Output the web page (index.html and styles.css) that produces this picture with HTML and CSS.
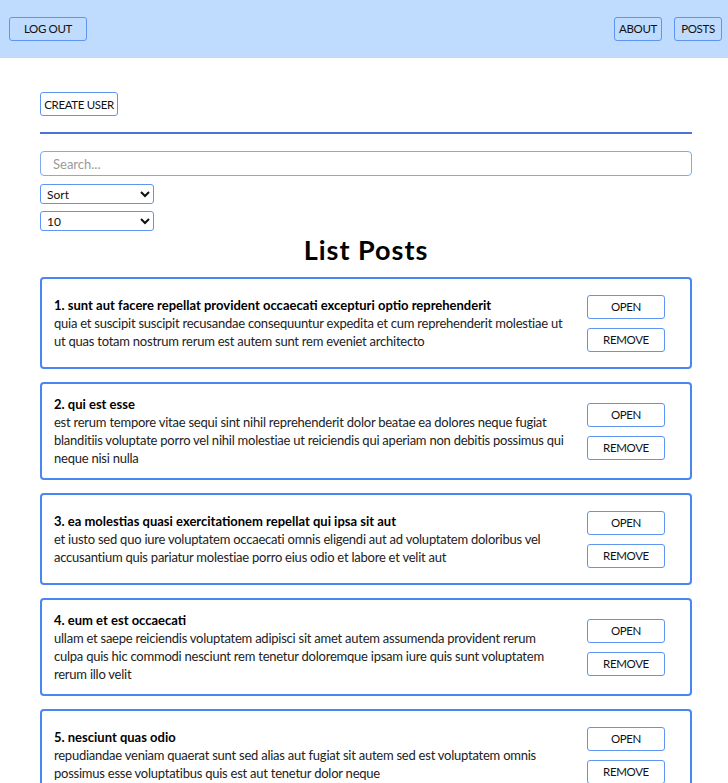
FILE: index.html
```html
<!DOCTYPE html>
<html lang="en">
<head>
<meta charset="utf-8">
<title>Posts</title>
<link rel="stylesheet" href="styles.css">
</head>
<body>
<header class="navbar">
  <button class="btn btn-wide">LOG OUT</button>
  <nav class="nav-links">
    <button class="btn btn-small">ABOUT</button>
    <button class="btn btn-small">POSTS</button>
  </nav>
</header>
<main class="page">
  <button class="btn btn-wide">CREATE USER</button>
  <hr class="divider">
  <input class="search" type="text" placeholder="Search...">
  <select class="select select-sort"><option>Sort</option></select>
  <select class="select select-limit"><option>10</option></select>
  <h1 class="title">List Posts</h1>
  <div class="list">
    <div class="card">
      <div class="card-text">
        <strong class="card-title">1. sunt aut facere repellat provident occaecati excepturi optio reprehenderit</strong>
        <div class="card-body">quia et suscipit suscipit recusandae consequuntur expedita et cum reprehenderit molestiae ut ut quas totam nostrum rerum est autem sunt rem eveniet architecto</div>
      </div>
      <div class="card-actions">
        <button class="btn btn-wide">OPEN</button>
        <button class="btn btn-wide">REMOVE</button>
      </div>
    </div>
    <div class="card">
      <div class="card-text">
        <strong class="card-title">2. qui est esse</strong>
        <div class="card-body">est rerum tempore vitae sequi sint nihil reprehenderit dolor beatae ea dolores neque fugiat blanditiis voluptate porro vel nihil molestiae ut reiciendis qui aperiam non debitis possimus qui neque nisi nulla</div>
      </div>
      <div class="card-actions">
        <button class="btn btn-wide">OPEN</button>
        <button class="btn btn-wide">REMOVE</button>
      </div>
    </div>
    <div class="card">
      <div class="card-text">
        <strong class="card-title">3. ea molestias quasi exercitationem repellat qui ipsa sit aut</strong>
        <div class="card-body">et iusto sed quo iure voluptatem occaecati omnis eligendi aut ad voluptatem doloribus vel accusantium quis pariatur molestiae porro eius odio et labore et velit aut</div>
      </div>
      <div class="card-actions">
        <button class="btn btn-wide">OPEN</button>
        <button class="btn btn-wide">REMOVE</button>
      </div>
    </div>
    <div class="card">
      <div class="card-text">
        <strong class="card-title">4. eum et est occaecati</strong>
        <div class="card-body">ullam et saepe reiciendis voluptatem adipisci sit amet autem assumenda provident rerum culpa quis hic commodi nesciunt rem tenetur doloremque ipsam iure quis sunt voluptatem rerum illo velit</div>
      </div>
      <div class="card-actions">
        <button class="btn btn-wide">OPEN</button>
        <button class="btn btn-wide">REMOVE</button>
      </div>
    </div>
    <div class="card">
      <div class="card-text">
        <strong class="card-title">5. nesciunt quas odio</strong>
        <div class="card-body">repudiandae veniam quaerat sunt sed alias aut fugiat sit autem sed est voluptatem omnis possimus esse voluptatibus quis est aut tenetur dolor neque</div>
      </div>
      <div class="card-actions">
        <button class="btn btn-wide">OPEN</button>
        <button class="btn btn-wide">REMOVE</button>
      </div>
    </div>
  </div>
</main>
</body>
</html>
```
FILE: styles.css
```css
* { box-sizing: border-box; }

body {
  margin: 0;
  font-family: "Lato", "Noto Sans", sans-serif;
  color: #111;
  background: #fff;
}

.navbar {
  height: 58px;
  background: #bfdbfe;
  display: flex;
  align-items: center;
  justify-content: space-between;
  padding: 0 6px 1px 9px;
}

.nav-links {
  display: flex;
  gap: 12px;
}

.btn {
  height: 24px;
  padding: 0;
  background: transparent;
  border: 1px solid #5e95f2;
  border-radius: 3px;
  font-family: "Lato", "Noto Sans", sans-serif;
  font-size: 11.5px;
  letter-spacing: -0.35px;
  white-space: nowrap;
  color: #111;
  cursor: pointer;
}

.btn-wide { width: 78px; }
.btn-small { width: 48px; }

.page {
  padding: 34px 36px 0 40px;
  display: flex;
  flex-direction: column;
  align-items: flex-start;
}

.divider {
  width: 100%;
  margin: 16px 0 0;
  border: 0;
  height: 2px;
  background: #4d72d8;
}

.search {
  width: 100%;
  height: 25px;
  margin-top: 17px;
  padding: 0 12px;
  border: 1px solid #7faaf2;
  border-radius: 4px;
  font-family: "Lato", "Noto Sans", sans-serif;
  font-size: 13px;
  color: #111;
  outline: none;
}

.search::placeholder { color: #9a9a9a; }

.select {
  width: 114px;
  height: 20px;
  padding: 0 2px;
  border: 1px solid #5e95f2;
  border-radius: 3px;
  background: #fff;
  font-family: "Lato", "Noto Sans", sans-serif;
  font-size: 12px;
  color: #111;
}

.select-sort { margin-top: 8px; }
.select-limit { margin-top: 7px; }

.title {
  align-self: stretch;
  text-align: center;
  margin: 2px 0 10px;
  font-size: 27px;
  line-height: 34px;
  font-weight: 700;
  letter-spacing: 1px;
  color: #000;
}

.list {
  width: 100%;
  display: flex;
  flex-direction: column;
  gap: 13px;
}

.card {
  display: flex;
  align-items: center;
  border: 2px solid #4a86f2;
  border-radius: 4px;
  padding: 11px 12px;
}

.card-text {
  flex: 1;
  padding-right: 4px;
  font-size: 13px;
  line-height: 18px;
}

.card-title {
  display: block;
  font-weight: 700;
  color: #000;
}

.card-body {
  letter-spacing: -0.24px;
  color: #222;
}

.card-actions {
  display: flex;
  flex-direction: column;
  margin: 0 13px 0 17px;
}

.card-actions .btn { margin: 4.5px 0; }
```
